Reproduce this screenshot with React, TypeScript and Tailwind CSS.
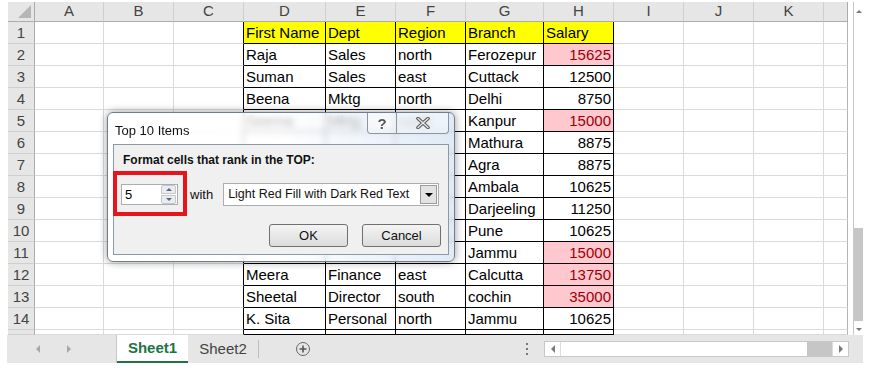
import React from 'react';

type Row = [string, string, string, string, number | null, boolean?];

const letters = ['', 'A', 'B', 'C', 'D', 'E', 'F', 'G', 'H', 'I', 'J', 'K', ''];

// rows 6-11 of D:F sit under the dialog, so they are left blank
const rows: (Row | null)[] = [
  ['First Name', 'Dept', 'Region', 'Branch', null],
  ['Raja', 'Sales', 'north', 'Ferozepur', 15625, true],
  ['Suman', 'Sales', 'east', 'Cuttack', 12500],
  ['Beena', 'Mktg', 'north', 'Delhi', 8750],
  ['Seema', 'Mktg', 'north', 'Kanpur', 15000, true],
  ['', '', '', 'Mathura', 8875],
  ['', '', '', 'Agra', 8875],
  ['', '', '', 'Ambala', 10625],
  ['', '', '', 'Darjeeling', 11250],
  ['', '', '', 'Pune', 10625],
  ['', '', '', 'Jammu', 15000, true],
  ['Meera', 'Finance', 'east', 'Calcutta', 13750, true],
  ['Sheetal', 'Director', 'south', 'cochin', 35000, true],
  ['K. Sita', 'Personal', 'north', 'Jammu', 10625],
  null,
];

function HeaderRow() {
  return (
    <>
      <div className="relative bg-[#e6e6e6] border-r border-b border-[#ababab]">
        <div className="absolute right-[3px] bottom-[3px] w-0 h-0 border-l-[13px] border-l-transparent border-b-[13px] border-b-[#b6b6b6]" />
      </div>
      {letters.slice(1).map((l, i) => (
        <div
          key={i}
          className={`flex items-center justify-center bg-[#e6e6e6] border-b border-[#ababab] text-[15px] text-[#444] ${
            i === 11 ? 'border-r border-r-[#ababab]' : 'border-r border-r-[#cfcfcf]'
          }`}
        >
          {l}
        </div>
      ))}
    </>
  );
}

function SheetRow({ n, row }: { n: number; row: Row | null }) {
  const cells = [];
  cells.push(
    <div
      key="h"
      className="flex items-end justify-center pb-[1px] leading-[18px] bg-[#e6e6e6] border-r border-r-[#ababab] border-b border-b-[#cfcfcf] text-[15px] text-[#444]"
    >
      {n <= 14 ? n : ''}
    </div>
  );
  for (let c = 1; c <= 12; c++) {
    const inTable = c >= 4 && c <= 8;
    const last = c === 12;
    let border = 'border-r border-b border-[#dadada]';
    if (c === 3) border = 'border-r border-r-black border-b border-b-[#dadada]';
    if (inTable) border = 'border-r border-b border-black';
    if (last) border = 'border-r border-r-[#b4b4b4] border-b border-b-[#dadada]';
    let content: React.ReactNode = null;
    let extra = 'text-black';
    if (inTable && row) {
      const idx = c - 4;
      if (n === 1) {
        extra = 'text-black bg-[#ffff00]';
        content = idx === 4 ? 'Salary' : row[idx];
      } else if (idx < 4) {
        content = row[idx];
      } else {
        content = row[4];
        extra = row[5] ? 'justify-end bg-[#ffc7ce] text-[#9c0006]' : 'justify-end text-black';
      }
    }
    cells.push(
      <div
        key={c}
        className={`flex items-end pb-[1px] leading-[18px] px-[2px] whitespace-nowrap overflow-hidden text-[15px] ${border} ${extra}`}
      >
        {content}
      </div>
    );
  }
  return <>{cells}</>;
}

function Dialog() {
  return (
    <div className="absolute left-[107px] top-[112px] w-[348px] h-[150px] rounded-[6px] border border-[#6f7d8c] shadow-[0_0_9px_rgba(0,0,0,0.4)] overflow-hidden backdrop-blur-[3px] bg-gradient-to-r from-white/85 via-white/70 to-[#d6e4f4]/75 flex flex-col">
      <div className="h-[31px] flex items-start justify-between pl-[7px] pr-[5px]">
        <span className="mt-[8px] text-[13px] text-[#111]">Top 10 Items</span>
        <div className="flex h-[21px]">
          <div className="w-[30px] h-full flex items-center justify-center border border-t-0 border-[#8b96a3] rounded-bl-[4px] bg-white/40">
            <span className="text-[15px] font-bold text-[#555] leading-none [text-shadow:0_0_2px_#fff]">?</span>
          </div>
          <div className="w-[52px] h-full flex items-center justify-center border border-t-0 border-l-0 border-[#8b96a3] rounded-br-[4px] bg-white/40">
            <svg width="14" height="12" viewBox="0 0 14 12">
              <path d="M2 1.5 L12 10.5 M12 1.5 L2 10.5" stroke="#5b5b5b" strokeWidth="3.6" strokeLinecap="round" />
              <path d="M2 1.5 L12 10.5 M12 1.5 L2 10.5" stroke="#e8e8e8" strokeWidth="1.4" strokeLinecap="round" />
            </svg>
          </div>
        </div>
      </div>
      <div className="relative mx-[5px] h-[111px] bg-[#f0f0f0] border border-[#8d99a6] flex flex-col">
        <div className="mt-[7px] ml-[9px] text-[12px] font-bold text-[#111] leading-[16px]">
          Format cells that rank in the TOP:
        </div>
        <div className="mt-[15px] flex items-center h-[23px]">
          <div className="ml-[7px] w-[57px] h-[21px] bg-white border border-[#abadb3] flex items-center">
            <span className="ml-[3px] flex-1 text-[13px] text-black">5</span>
            <div className="w-[15px] h-[19px] mr-[1px] flex flex-col gap-[1px]">
              <div className="flex-1 flex items-center justify-center bg-[#ececec] border border-[#c3c7cf] rounded-t-[2px]">
                <div className="w-0 h-0 border-l-[3px] border-r-[3px] border-l-transparent border-r-transparent border-b-[3px] border-b-[#4e6b95]" />
              </div>
              <div className="flex-1 flex items-center justify-center bg-[#ececec] border border-[#c3c7cf] rounded-b-[2px]">
                <div className="w-0 h-0 border-l-[3px] border-r-[3px] border-l-transparent border-r-transparent border-t-[3px] border-t-[#4e6b95]" />
              </div>
            </div>
          </div>
          <span className="ml-[12px] text-[13px] text-[#111]">with</span>
          <div className="ml-[10px] w-[216px] h-[23px] bg-white border border-[#abadb3] flex items-center">
            <span className="ml-[4px] flex-1 text-[12.5px] text-[#111] whitespace-nowrap">Light Red Fill with Dark Red Text</span>
            <div className="w-[17px] h-[19px] mr-[1px] bg-[#e3e3e3] border border-[#9a9a9a] flex items-center justify-center">
              <div className="w-0 h-0 border-l-[4px] border-r-[4px] border-l-transparent border-r-transparent border-t-[4px] border-t-black" />
            </div>
          </div>
        </div>
        <div className="mt-[18px] flex justify-end gap-[14px] pr-[7px]">
          <div className="w-[79px] h-[23px] rounded-[3px] border border-[#707070] bg-gradient-to-b from-[#f4f4f4] to-[#dcdcdc] flex items-center justify-center text-[13px] text-[#111]">
            OK
          </div>
          <div className="w-[79px] h-[23px] rounded-[3px] border border-[#707070] bg-gradient-to-b from-[#f4f4f4] to-[#dcdcdc] flex items-center justify-center text-[13px] text-[#111]">
            Cancel
          </div>
        </div>
        <div className="absolute left-[-1px] top-[26px] w-[74px] h-[45px] border-[4px] border-[#e8141c]" />
      </div>
    </div>
  );
}

function TabBar() {
  return (
    <div className="ml-[7px] w-[856px] h-[28px] bg-[#e6e6e6] flex items-center text-[15px]">
      <div className="w-[109px] flex items-center">
        <div className="ml-[29px] w-0 h-0 border-t-[4px] border-b-[4px] border-t-transparent border-b-transparent border-r-[4px] border-r-[#a8a8a8]" />
        <div className="ml-[27px] w-0 h-0 border-t-[4px] border-b-[4px] border-t-transparent border-b-transparent border-l-[4px] border-l-[#a8a8a8]" />
      </div>
      <div className="w-[72px] h-full bg-white border-l border-[#c8c8c8] flex flex-col">
        <div className="flex-1 flex items-center justify-center font-bold text-[#217346]">Sheet1</div>
        <div className="h-[2px] bg-[#217346]" />
      </div>
      <div className="w-[70px] flex items-center justify-center text-[#444]">Sheet2</div>
      <div className="w-px h-[18px] bg-[#bdbdbd]" />
      <div className="ml-[37px] w-[14px] h-[14px] rounded-full border-[1.5px] border-[#666] flex items-center justify-center">
        <svg width="8" height="8" viewBox="0 0 8 8">
          <path d="M4 0.5 V7.5 M0.5 4 H7.5" stroke="#555" strokeWidth="1.6" />
        </svg>
      </div>
      <div className="ml-[216px] flex flex-col gap-[3px]">
        <div className="w-[2px] h-[2px] bg-[#777]" />
        <div className="w-[2px] h-[2px] bg-[#777]" />
        <div className="w-[2px] h-[2px] bg-[#777]" />
      </div>
      <div className="ml-[16px] w-[305px] h-[16px] bg-white border border-[#c8c8c8] flex items-center">
        <div className="w-[16px] h-full border-r border-[#dcdcdc] flex items-center justify-center">
          <div className="w-0 h-0 border-t-[4px] border-b-[4px] border-t-transparent border-b-transparent border-r-[4px] border-r-[#7a7a7a]" />
        </div>
        <div className="flex-1" />
        <div className="w-[25px] h-full bg-[#c6c6c6]" />
        <div className="w-[16px] h-full border-l border-[#dcdcdc] flex items-center justify-center">
          <div className="w-0 h-0 border-t-[4px] border-b-[4px] border-t-transparent border-b-transparent border-l-[4px] border-l-[#7a7a7a]" />
        </div>
      </div>
    </div>
  );
}

function VScroll() {
  return (
    <div className="ml-[5px] w-[10px] h-[333px] bg-white border-l border-[#c8c8c8] flex flex-col">
      <div className="h-[18px] flex items-center justify-center">
        <div className="w-0 h-0 border-l-[3px] border-r-[3px] border-l-transparent border-r-transparent border-b-[3px] border-b-[#7a7a7a]" />
      </div>
      <div className="flex-1 flex flex-col justify-end pb-[2px]">
        <div className="h-[93px] bg-[#c6c6c6]" />
      </div>
      <div className="h-[12px] flex items-center justify-center">
        <div className="w-0 h-0 border-l-[3px] border-r-[3px] border-l-transparent border-r-transparent border-t-[3px] border-t-[#7a7a7a]" />
      </div>
    </div>
  );
}

export default function App() {
  return (
    <div className="relative w-[872px] h-[371px] bg-white overflow-hidden font-['Liberation_Sans',Arial,sans-serif]">
      <div className="flex pt-[2px] pl-[8px]">
        <div className="grid grid-cols-[27px_69px_70px_70px_82px_70px_70px_78px_70px_70px_70px_70px_24px] grid-rows-[20px_repeat(14,22px)_5px] h-[333px] overflow-hidden">
          <HeaderRow />
          {rows.map((r, i) => (
            <SheetRow key={i} n={i + 1} row={r} />
          ))}
        </div>
        <VScroll />
      </div>
      <TabBar />
      <Dialog />
    </div>
  );
}
